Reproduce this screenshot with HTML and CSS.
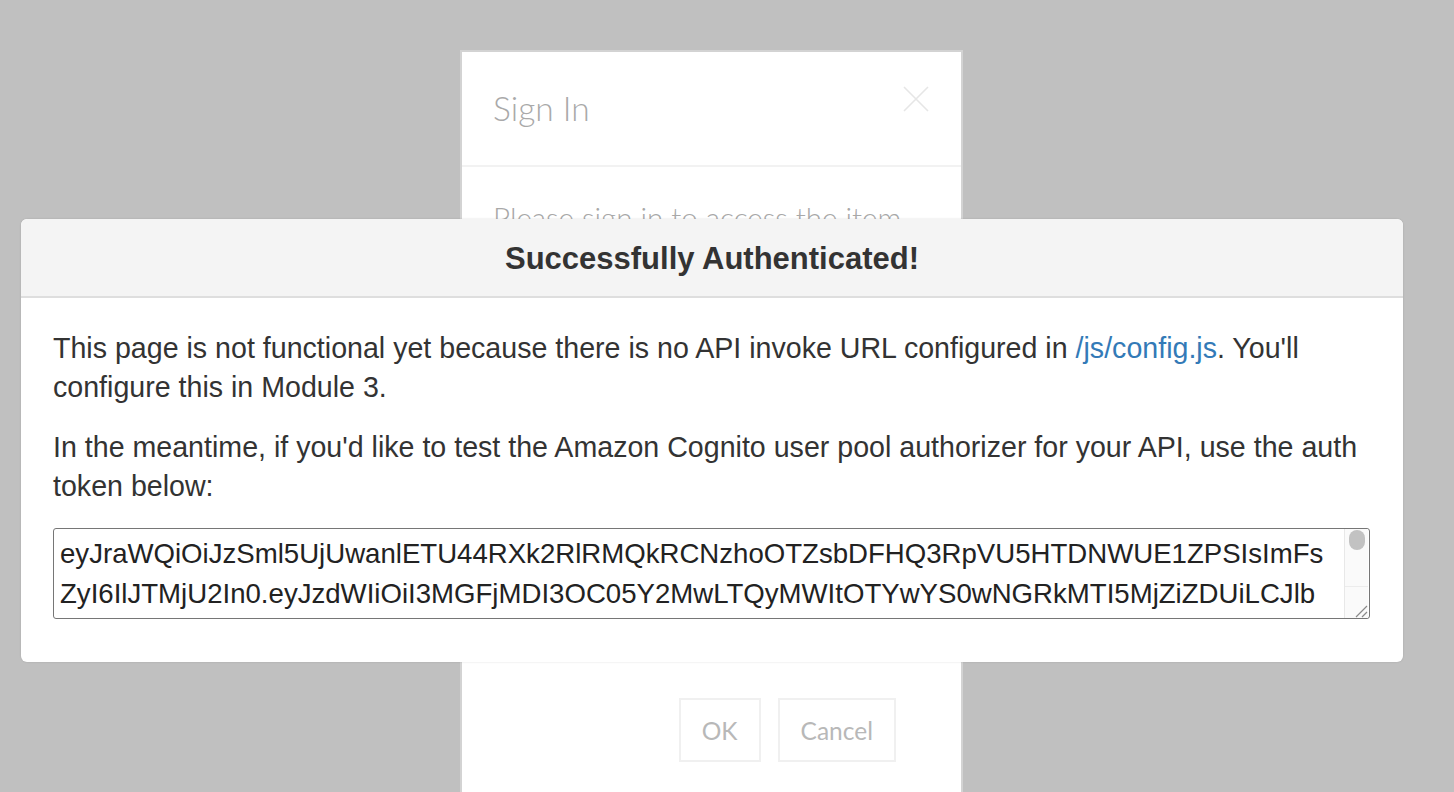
FILE: index.html
```html
<!DOCTYPE html>
<html lang="en">
<head>
<meta charset="utf-8">
<title>Successfully Authenticated!</title>
<link rel="stylesheet" href="styles.css">
</head>
<body>
<div class="signin">
  <div class="signin-head">
    <h2 class="signin-title">Sign In</h2>
    <span class="signin-close" aria-hidden="true">
      <svg width="26" height="26" viewBox="0 0 26 26"><path d="M1 1L25 25M25 1L1 25" stroke="#e6e6e6" stroke-width="1.6" fill="none"/></svg>
    </span>
  </div>
  <div class="signin-body">
    <p class="signin-text">Please sign in to access the item</p>
  </div>
  <div class="signin-foot">
    <button class="signin-btn">OK</button>
    <button class="signin-btn">Cancel</button>
  </div>
</div>

<div class="modal">
  <div class="modal-head">
    <h4 class="modal-title">Successfully Authenticated!</h4>
  </div>
  <div class="modal-body">
    <p class="modal-p">This page is not functional yet because there is no API invoke URL configured in <a class="link" href="#">/js/config.js</a>. You'll configure this in Module 3.</p>
    <p class="modal-p">In the meantime, if you'd like to test the Amazon Cognito user pool authorizer for your API, use the auth token below:</p>
    <div class="token-wrap">
      <textarea class="token" readonly>eyJraWQiOiJzSml5UjUwanlETU44RXk2RlRMQkRCNzhoOTZsbDFHQ3RpVU5HTDNWUE1ZPSIsImFs
ZyI6IlJTMjU2In0.eyJzdWIiOiI3MGFjMDI3OC05Y2MwLTQyMWItOTYwYS0wNGRkMTI5MjZiZDUiLCJlb
WFpbF92ZXJpZmllZCI6dHJ1ZSwiaXNzIjoiaHR0cHM6XC9cL2NvZ25pdG8taWRwLnVzLWVhc3QtMS5h
bWF6b25hd3MuY29tXC91cy1lYXN0LTFfWkxMQ2J5T3dGIiwiY29nbml0bzp1c2VybmFtZSI6InVzZXIt
ZXhhbXBsZS5jb20iLCJhdWQiOiI2bTRqZ3FzNWgyYmI4OGZ0NWZxNjV0ZmVzIiwiZXZlbnRfaWQiOiI4
YzJkMmE1Yi1hYjE0LTExZTgtOWVlOS04NTgxMjMzZTg5YjYiLCJ0b2tlbl91c2UiOiJpZCIsImF1dGhf
dGltZSI6MTUzNjIzNjE3NiwiZXhwIjoxNTM2MjM5Nzc2LCJpYXQiOjE1MzYyMzYxNzYsImVtYWlsIjoi
dXNlckBleGFtcGxlLmNvbSJ9.Jk3x9QhY2mZ7b0sTqL8uWcVn4RfGpA1eKdH6oIyXzBjNtMwE5sUvCr
Qa7PfLhDgZ2iYx0TnOkSbWu3JmVe9RqFcA4HlGsKdNpIy8MoXwTzBvE1UaLj6ChQf5Yt-ReD_gWnZs
kP2mVbXoA7cHuLqJ9sFe0TyIdRw3NgKzOpMa</textarea>
      <div class="scrollbar" aria-hidden="true">
        <div class="scroll-thumb"></div>
        <div class="scroll-corner">
          <svg width="16" height="16" viewBox="0 0 16 16"><path d="M15 4L4 15M15 10L10 15" stroke="#8a8a8a" stroke-width="1.2" fill="none"/></svg>
        </div>
      </div>
    </div>
  </div>
</div>
</body>
</html>
```

FILE: styles.css
```css
html, body {
  margin: 0;
  padding: 0;
}

body {
  background: #c0c0c0;
  height: 792px;
  overflow: hidden;
  font-family: "Liberation Sans", Arial, sans-serif;
}

/* Background sign-in dialog */
.signin {
  width: 499px;
  margin: 50px 0 0 460px;
  background: #ffffff;
  border-left: 2px solid #d3d3d3;
  border-right: 2px solid #d3d3d3;
  border-top: 2px solid #d3d3d3;
  height: 760px;
  font-family: Lato, "Open Sans", sans-serif;
  font-weight: 300;
}

.signin-head {
  display: flex;
  justify-content: space-between;
  align-items: flex-start;
  height: 113px;
  padding: 0 32px 0 31px;
  border-bottom: 2px solid #f2f2f2;
}

.signin-title {
  margin: 36px 0 0 0;
  font-size: 33.5px;
  font-weight: 300;
  color: #a9a9a9;
  line-height: 40px;
}

.signin-close {
  display: block;
  margin-top: 34px;
  width: 26px;
  height: 26px;
}

.signin-close svg {
  display: block;
}

.signin-body {
  height: 494px;
  margin: 0 31px;
  padding-top: 33px;
  box-sizing: border-box;
  border-bottom: 2px solid #eeeeee;
}

.signin-text {
  margin: 0;
  font-size: 29.5px;
  color: #a8a8a8;
  line-height: 36px;
  white-space: nowrap;
}

.signin-foot {
  display: flex;
  justify-content: flex-end;
  gap: 17px;
  padding: 37px 65px 0 0;
}

.signin-btn {
  height: 64px;
  padding: 0 21px;
  background: #ffffff;
  border: 2px solid #f0f0f0;
  font-family: Lato, "Open Sans", sans-serif;
  font-weight: 400;
  font-size: 24.5px;
  color: #b8b8b8;
}

/* Foreground modal */
.modal {
  position: absolute;
  left: 21px;
  top: 219px;
  width: 1382px;
  height: 443px;
  background: #ffffff;
  border-radius: 6px;
  overflow: hidden;
  box-shadow: 0 0 2px rgba(0, 0, 0, 0.15);
}

.modal-head {
  height: 77px;
  background: #f4f4f4;
  border-bottom: 2px solid #dedede;
  display: flex;
  align-items: center;
  justify-content: center;
}

.modal-title {
  margin: 2px 0 0 0;
  font-size: 31px;
  font-weight: 700;
  color: #333333;
}

.modal-body {
  padding: 31px 33px 0 32px;
}

.modal-p {
  margin: 0 0 21px 0;
  font-size: 28.6px;
  line-height: 39px;
  color: #333333;
}

.modal-p + .modal-p {
  margin-bottom: 22px;
}

.link {
  color: #337ab7;
  text-decoration: none;
}

.token-wrap {
  position: relative;
  width: 1317px;
  height: 91px;
}

.token {
  display: block;
  box-sizing: border-box;
  width: 1317px;
  height: 91px;
  margin: 0;
  padding: 5px 30px 4px 6px;
  border: 1px solid #767676;
  border-radius: 3px;
  font-family: "Liberation Sans", Arial, sans-serif;
  font-size: 27.6px;
  line-height: 40px;
  color: #222222;
  background: #ffffff;
  white-space: pre;
  overflow: hidden;
  resize: none;
  outline: none;
}

.scrollbar {
  position: absolute;
  top: 1px;
  right: 2px;
  bottom: 1px;
  width: 23px;
  background: #fafafa;
  border-left: 1px solid #e8e8e8;
  display: flex;
  flex-direction: column;
  justify-content: space-between;
  align-items: center;
}

.scroll-thumb {
  width: 16px;
  height: 20px;
  margin-top: 1px;
  border-radius: 9px;
  background: #c2c2c2;
}

.scroll-corner {
  width: 100%;
  height: 31px;
  border-top: 1px solid #ececec;
  display: flex;
  justify-content: flex-end;
  align-items: flex-end;
}

.scroll-corner svg {
  display: block;
}
```
